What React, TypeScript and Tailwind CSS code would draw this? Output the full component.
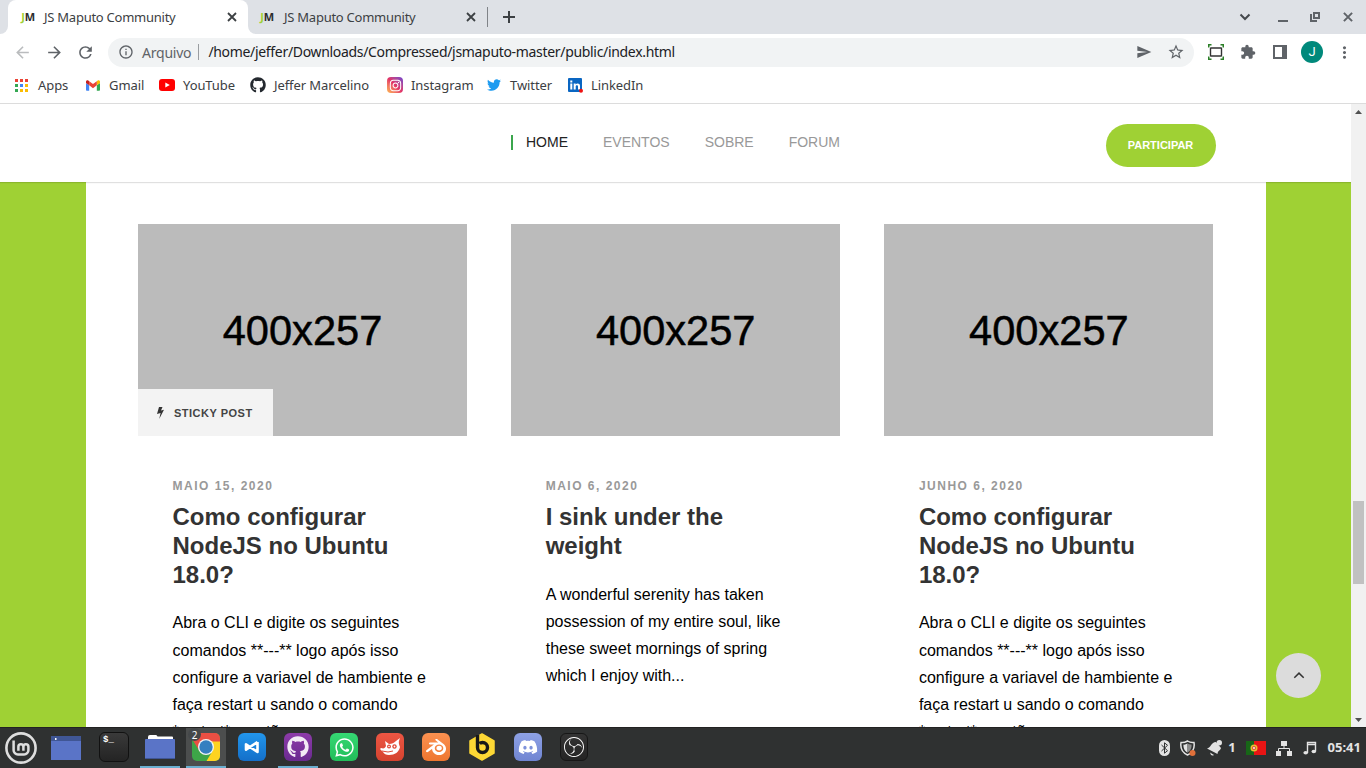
import React from "react";
import { MdArrowBack, MdArrowForward, MdRefresh, MdInfoOutline, MdSend, MdStarBorder, MdExtension, MdMoreVert } from "react-icons/md";
import { FaGithub, FaTwitter, FaWhatsapp, FaDiscord, FaInstagram } from "react-icons/fa";
import { SiBlender, SiObsstudio } from "react-icons/si";

function Favicon() {
  return (
    <span className="flex w-4 justify-center font-['Open_Sans',sans-serif] text-[11px] leading-4 font-bold tracking-[-0.3px]">
      <span className="text-[#9fd134]">J</span>
      <span className="text-[#2c2c2c]">M</span>
    </span>
  );
}

function TabClose() {
  return (
    <svg className="mr-[3px] size-[10px]" viewBox="0 0 10 10" fill="none" stroke="#3c4043" strokeWidth="1.800"><path d="m1 1 8 8m0-8-8 8" /></svg>
  );
}

function TabStrip() {
  return (
    <div className="flex h-[34px] shrink-0 bg-[#dee1e6] text-[#3c4043]">
      <div className="flex w-2 bg-white"><div className="h-full w-full rounded-br-lg bg-[#dee1e6]" /></div>
      <div className="flex w-[240px] items-center rounded-t-lg bg-white pr-2 pl-3">
        <Favicon />
        <span className="ml-2 flex-1 pt-px text-[13px] tracking-[-0.250px] whitespace-nowrap">JS Maputo Community</span>
        <TabClose />
      </div>
      <div className="flex w-[239px] items-center bg-white">
        <div className="flex h-full w-full items-center rounded-bl-lg bg-[#dee1e6] pr-2 pl-[11px]">
          <Favicon />
          <span className="ml-[9px] flex-1 pt-px text-[13px] tracking-[-0.250px] whitespace-nowrap">JS Maputo Community</span>
          <TabClose />
        </div>
      </div>
      <div className="mt-[7px] h-5 w-px bg-[#808388]" />
      <div className="flex items-center pl-[15px]"><svg className="size-3" viewBox="0 0 12 12" stroke="#3c4043" strokeWidth="2"><path d="M6 0v12M0 6h12" /></svg></div>
      <div className="ml-auto flex items-center pr-[13px]">
        <svg className="mr-[26px] size-3" viewBox="0 0 12 12" fill="none" stroke="#45494d" strokeWidth="2"><path d="M1.500 3.500 6 8l4.500-4.500" /></svg>
        <svg className="mr-[20px] size-3" viewBox="0 0 12 12" fill="#5f6368"><path d="M1 9h10v2H1z" /></svg>
        <svg className="mr-[22px] size-3" viewBox="0 0 12 12" fill="none" stroke="#5f6368" strokeWidth="2"><path d="M5 2h5v5H5zM2 3v7h6" /></svg>
        <svg className="size-[10px]" viewBox="0 0 11 11" fill="none" stroke="#5f6368" strokeWidth="2.200"><path d="m1 1 9 9m0-9-9 9" /></svg>
      </div>
    </div>
  );
}

function Toolbar() {
  return (
    <div className="flex h-9 shrink-0 items-center pl-[13px] text-[#5f6368]">
      <MdArrowBack className="size-[19px] text-[#babcbe]" />
      <MdArrowForward className="ml-[13px] size-[19px]" />
      <MdRefresh className="ml-[12px] size-[19px]" />
      <div className="ml-[13px] flex h-[29px] w-[1086px] items-center rounded-full bg-[#f1f3f4] pr-[9px] pl-[10px]">
        <MdInfoOutline className="size-4" />
        <span className="ml-2 text-[14px] tracking-[-0.220px]">Arquivo</span>
        <span className="ml-[7px] h-4 w-px bg-[#9a9da1]" />
        <span className="ml-[9px] pb-px text-[14px] tracking-[-0.320px] whitespace-nowrap text-[#202124]">/home/jeffer/Downloads/Compressed/jsmaputo-master/public/index.html</span>
        <MdSend className="ml-auto size-4" />
        <MdStarBorder className="ml-[15px] size-[18px]" />
      </div>
      <svg className="ml-[14px] size-4" viewBox="0 0 16 16" fill="none">
        <path d="M.75 3.500V.75H3.500M12.500.75h2.750V3.500M.75 12.500v2.750H3.500M12.500 15.250h2.750V12.500" stroke="#2b7f27" strokeWidth="1.500" />
        <rect x="2.500" y="4" width="11" height="8" rx=".5" stroke="#333" strokeWidth="1.400" />
      </svg>
      <MdExtension className="ml-4 size-4" />
      <svg className="ml-[17px] size-[14px]" viewBox="0 0 14 14"><path d="M1 1h12v12H1z" fill="none" stroke="#5f6368" strokeWidth="2" /><path d="M9 0h5v14H9z" fill="#5f6368" /></svg>
      <span className="ml-[14px] flex size-[22px] items-center justify-center rounded-full bg-[#00897b] font-['Roboto',sans-serif] text-[13px] text-white">J</span>
      <MdMoreVert className="ml-[12px] size-[19px]" />
    </div>
  );
}

function Bookmark({ label, icon, className }: { label: string; icon: React.ReactNode; className: string }) {
  return (
    <div className={`flex shrink-0 items-center ${className}`}>
      <span className="flex w-4 justify-center">{icon}</span>
      <span className="ml-2 pt-px text-[13px] tracking-[-0.080px] whitespace-nowrap">{label}</span>
    </div>
  );
}

const appColors = ["#ea4335", "#ea4335", "#ea4335", "#34a853", "#4285f4", "#fbbc04", "#34a853", "#fbbc04", "#fbbc04"];

function Bookmarks() {
  return (
    <div className="flex h-[34px] shrink-0 items-center border-b border-[#dcdcdc] pb-[3px] pl-[14px] text-[#3c4043]">
      <Bookmark className="w-[71px]" label="Apps" icon={
        <svg className="mr-px size-[13px]" viewBox="0 0 13 13">
          {appColors.map((c, i) => <rect key={i} x={(i % 3) * 5} y={Math.floor(i / 3) * 5} width="3" height="3" fill={c} />)}
        </svg>} />
      <Bookmark className="w-[74px]" label="Gmail" icon={
        <svg className="h-[11px] w-[14px]" viewBox="52 42 88 66">
          <path fill="#4285f4" d="M58 108h14V74L52 59v43c0 3.300 2.700 6 6 6" /><path fill="#34a853" d="M120 108h14c3.300 0 6-2.700 6-6V59l-20 15" />
          <path fill="#fbbc04" d="M120 48v26l20-15v-8c0-7.400-8.500-11.600-14.400-7.200" /><path fill="#ea4335" d="M72 74V48l24 18 24-18v26L96 92" />
          <path fill="#c5221f" d="M52 51v8l20 15V48l-5.600-4.200C60.500 39.400 52 43.600 52 51" />
        </svg>} />
      <Bookmark className="w-[91px]" label="YouTube" icon={
        <svg className="h-3 w-4" viewBox="0 0 16 12"><rect width="16" height="12" rx="3" fill="red" /><path d="m6.300 3.400 4.500 2.600-4.500 2.600z" fill="#fff" /></svg>} />
      <Bookmark className="w-[137px]" label="Jeffer Marcelino" icon={<FaGithub className="size-4 shrink-0 text-[#24292f]" />} />
      <Bookmark className="w-[99px]" label="Instagram" icon={
        <span className="flex size-4 items-center justify-center rounded-[4px] bg-linear-to-tr from-[#fdb84e] via-[#e23167] to-[#6f3dd0]"><FaInstagram className="size-[13px] text-white" /></span>} />
      <Bookmark className="w-[81px]" label="Twitter" icon={<FaTwitter className="size-[14px] text-[#1d9bf0]" />} />
      <Bookmark className="" label="LinkedIn" icon={
        <svg className="size-[15px]" viewBox="0 0 15 15">
          <rect width="14" height="14" rx="1" fill="#0a66c2" />
          <path d="M2.300 5.500h2v6h-2zM2.300 2.400h2v2h-2zM5.700 5.500h1.900v.9c1-1.500 4.400-1.500 4.400 1.400v3.700h-2V8.400c0-1.700-2.300-1.700-2.300 0v3.100h-2z" fill="#fff" />
          <circle cx="13" cy="12.700" r="2" fill="#e11" />
        </svg>} />
    </div>
  );
}

function SiteHeader() {
  return (
    <header className="relative z-10 flex h-[78px] shrink-0 bg-white shadow-[0_1px_1px_rgba(0,0,0,0.12)]">
      <nav className="mt-[29px] ml-[511px] flex h-[18px] gap-[35px] text-[14px] leading-[18px] text-[#999]">
        <span className="flex items-center text-[#222]"><span className="mr-[13px] h-[15px] w-0.5 bg-[#3ba64d]" />HOME</span>
        <span>EVENTOS</span>
        <span>SOBRE</span>
        <span>FORUM</span>
      </nav>
      <button className="mt-5 mr-[135px] ml-auto h-[43px] w-[110px] rounded-full bg-[#9fd134] pr-px text-[11px] font-bold text-white">PARTICIPAR</button>
    </header>
  );
}

function Card({ date, title, lines, sticky }: { date: string; title: string[]; lines: string[]; sticky?: boolean }) {
  return (
    <article className="w-[329px] shrink-0">
      <div className="relative flex h-[212px] items-center justify-center bg-[#bbb] text-[41.600px] text-black">
        <span className="pt-px leading-[48px] [-webkit-text-stroke:0.500px_black]">400x257</span>
        {sticky && (
          <div className="absolute bottom-0 left-0 flex h-[47px] w-[135px] items-center bg-[#f3f3f3] pt-px pl-[18px] text-[11px] font-bold tracking-[0.500px] text-[#444]">
            <svg className="mr-[9px] h-3 w-[9px] shrink-0" viewBox="0 0 9 12" fill="#333"><path d="M3 0h3.500L5 3.400 8 2.800 3.200 12 4.600 6 1 6.900z" /></svg>
            <span className="whitespace-nowrap">STICKY POST</span>
          </div>
        )}
      </div>
      <div className="pt-[42px] pl-[34.500px]">
        <p className="text-[12px] leading-4 font-bold tracking-[1.500px] text-[#999]">{date}</p>
        <h2 className="mt-[9px] text-[24px] leading-[28.800px] font-bold text-[#333]">
          {title.map((t) => <span key={t} className="block whitespace-nowrap">{t}</span>)}
        </h2>
        <p className="mt-5 text-[16px] leading-[27.200px] text-black">
          {lines.map((t) => <span key={t} className="block whitespace-nowrap">{t}</span>)}
        </p>
      </div>
    </article>
  );
}

const nodeTitle = ["Como configurar", "NodeJS no Ubuntu", "18.0?"];
const nodeLines = ["Abra o CLI e digite os seguintes", "comandos **---** logo após isso", "configure a variavel de hambiente e", "faça restart u sando o comando", "*restart* e então"];
const sinkLines = ["A wonderful serenity has taken", "possession of my entire soul, like", "these sweet mornings of spring", "which I enjoy with..."];

function Page() {
  return (
    <div className="flex h-[623px] shrink-0 overflow-hidden font-['Liberation_Sans',sans-serif]">
      <div className="relative flex w-[1351px] flex-col overflow-hidden bg-[#9fd134]">
        <SiteHeader />
        <div className="ml-[86px] flex min-h-0 w-[1180px] flex-1 gap-[44.200px] overflow-hidden bg-white pt-[42px] pl-[52px]">
          <Card sticky date="MAIO 15, 2020" title={nodeTitle} lines={nodeLines} />
          <Card date="MAIO 6, 2020" title={["I sink under the", "weight"]} lines={sinkLines} />
          <Card date="JUNHO 6, 2020" title={nodeTitle} lines={nodeLines} />
        </div>
        <div className="absolute right-[30px] bottom-[29px] flex size-[45px] items-center justify-center rounded-full bg-[#dcdcdc]">
          <svg className="size-3" viewBox="0 0 12 12" fill="none" stroke="#333" strokeWidth="1.500"><path d="M1.300 7.800 6 3.100l4.700 4.700" /></svg>
        </div>
      </div>
      <div className="flex w-[15px] flex-col items-center bg-[#f1f1f1]">
        <svg className="mt-[6px] h-1 w-[7px]" viewBox="0 0 7 4" fill="#505050"><path d="M0 4h7L3.500 0z" /></svg>
        <div className="mt-[387px] h-[83px] w-[11px] bg-[#c1c1c1]" />
        <svg className="mt-auto mb-[5px] h-1 w-[7px]" viewBox="0 0 7 4" fill="#505050"><path d="M0 0h7L3.500 4z" /></svg>
      </div>
    </div>
  );
}

function Task({ children, open, active }: { children: React.ReactNode; open?: boolean; active?: boolean }) {
  return (
    <div className={`flex h-full w-10 shrink-0 flex-col ${active ? "bg-[#4c4e4e]" : ""}`}>
      <div className="flex min-h-0 flex-1 items-center justify-center">{children}</div>
      <div className={`h-0.5 ${open ? "bg-[#6aaecf]" : ""}`} />
    </div>
  );
}

const tile = "flex size-7 items-center justify-center rounded-md text-white";

function Taskbar() {
  return (
    <div className="flex h-[41px] shrink-0 border-t border-[#222] bg-[#2f3131] pl-px font-['Noto_Sans',sans-serif]">
      <div className="mr-[5px] flex">
        <Task>
          <svg className="size-8 translate-y-px" viewBox="0 0 32 32" fill="none" stroke="#dedede">
            <circle cx="16" cy="16" r="14.600" strokeWidth="2.600" />
            <path d="M8.600 8.500v9.700a4.300 4.300 0 0 0 4.300 4.300h6.200a4.300 4.300 0 0 0 4.300-4.300v-3.400a2.500 2.500 0 0 0-5 0v4M18.400 14.800a2.500 2.500 0 0 0-5 0v4" strokeWidth="2.500" />
          </svg>
        </Task>
      </div>
      <div className="mr-2 flex">
        <Task>
          <svg className="h-6 w-[30px] translate-y-px" viewBox="0 0 30 24"><path d="M0 0h30v24H0z" fill="#5a74c7" /><path d="M0 0h30v5H0z" fill="#405695" /><path d="M4 2h1.500v2H4z" fill="#fff" /></svg>
        </Task>
      </div>
      <div className="flex gap-1.5">
        <Task><div className="flex size-[30px] rounded-md border border-[#111] bg-linear-to-b from-[#3a3a3a] to-[#242424] pt-px pl-[3px] font-['Liberation_Mono',monospace] text-[9px] leading-3 font-bold text-white">$_</div></Task>
        <Task open>
          <svg className="h-6 w-[30px]" viewBox="0 0 30 24"><path d="M3 2q0-2 2-2h6q1 0 1.500 1.500H27q1 0 1 1V8H3z" fill="#fff" /><rect y="4" width="30" height="20" rx="1" fill="#5a74c7" /><path d="M0 23h30v1H0z" fill="#405695" /></svg>
        </Task>
        <div className="relative">
          <Task open active>
            <svg className="size-7" viewBox="0 0 28 28">
              <defs><clipPath id="chrome"><rect width="28" height="28" rx="5" /></clipPath></defs>
              <g clipPath="url(#chrome)">
                <path d="M0 0h28v28H0z" fill="#3da548" /><path d="M14 8h14v20H14.500l6-10z" fill="#fed321" /><path d="M0 0h28v8.500H14L7.500 18 0 6z" fill="#ea4f43" />
              </g>
              <circle cx="14" cy="14" r="8" fill="#f5f5f5" /><circle cx="14" cy="14" r="6.700" fill="#347fc0" />
            </svg>
          </Task>
          <span className="absolute top-0 left-[2px] flex size-[13px] items-center justify-center rounded-full bg-[#45484a] text-[10px] leading-3 text-white">2</span>
        </div>
        <Task>
          <div className={`${tile} bg-linear-to-b from-[#2296ec] to-[#146fc9]`}>
            <svg className="h-[14px] w-4" viewBox="0 0 16 14" fill="none" stroke="#fff" strokeWidth="2.600" strokeLinejoin="round"><path d="M13.500 2v10L2 4.300v5.400L13.500 2" /></svg>
          </div>
        </Task>
        <Task open><div className={`${tile} bg-linear-to-b from-[#8d3ba9] to-[#6a2a90]`}><FaGithub className="size-[22px] text-[#f2eaf5]" /></div></Task>
        <Task><div className={`${tile} bg-linear-to-b from-[#35d873] to-[#21bd59]`}><FaWhatsapp className="size-[21px]" /></div></Task>
        <Task><div className={`${tile} bg-linear-to-b from-[#ed5643] to-[#d5432f]`}>
          <svg className="h-[18px] w-[21px]" viewBox="0 0 21 18"><path d="M20 0c-1 3-2 4 0 9-1 5-5 8-11 8-3 0-5-1-6-3L0 11l1-1c3 1 4 0 5-2L5 3l4 3c3 0 5-1 7-3z" fill="#fff" /><circle cx="9" cy="8.500" r="2" fill="#df4937" /><circle cx="14.500" cy="8.500" r="2.200" fill="#df4937" /><circle cx="9" cy="8.500" r=".8" fill="#fff" /><circle cx="14.500" cy="8.500" r=".9" fill="#fff" /><path d="m2 13 6 1 5-1" stroke="#df4937" fill="none" /></svg>
        </div></Task>
        <Task><div className={`${tile} bg-linear-to-b from-[#fb9150] to-[#ee762f]`}><SiBlender className="size-5" /></div></Task>
        <Task>
          <svg className="h-7 w-[26px]" viewBox="0 0 26 28"><path d="m13 1 12 7v12l-12 7-12-7V8z" fill="#fdd835" stroke="#fdd835" strokeWidth="1.500" strokeLinejoin="round" /><path d="M8.500 2v12.500a5 5 0 1 0 5-5q-2 0-3 1" fill="none" stroke="#191919" strokeWidth="3.400" /></svg>
        </Task>
        <Task><div className={`${tile} bg-linear-to-b from-[#8ea1e5] to-[#7085d2]`}><FaDiscord className="size-5" /></div></Task>
        <Task><div className={`${tile} border border-[#171717] bg-linear-to-b from-[#343434] to-[#242424]`}><SiObsstudio className="size-5 shrink-0" /></div></Task>
      </div>
      <div className="ml-auto flex items-center pr-[5px] text-[#e3e3e3]">
        <svg className="h-4 w-[11px]" viewBox="0 0 11 16"><rect width="11" height="16" rx="5.500" fill="#e3e3e3" /><path d="m2.500 5 6 5.700-3 2.500V2.800l3 2.500-6 5.700" stroke="#2f3131" fill="none" /></svg>
        <svg className="ml-[10px] size-4" viewBox="0 0 16 16"><path d="M7.500 1Q4 3 1 2.500C0 9 3 13 7.500 15 12 13 15 9 14 2.500 11 3 9 2 7.500 1Z" fill="none" stroke="#e3e3e3" strokeWidth="1.500" /><path d="M7.500 3.500Q5 5 3.500 4.500C3 8 5 11.500 7.500 12.500z" fill="#e3e3e3" /><path d="M7.500 3.500q2 1.300 4 1C12 8 10 11.500 7.500 12.500z" fill="#8d8d8d" /><circle cx="12.500" cy="13" r="3" fill="#e0703a" /></svg>
        <svg className="ml-[11px] size-4" viewBox="0 0 16 16" fill="#e3e3e3"><path d="M0 8.500C4 8 4 2 9 2l5 6c-1 3-3 2-3.500 6z" /><circle cx="12.300" cy="2.800" r="2.700" /><path d="M3 12.500 7 15q-3 2-4-2.500" /></svg>
        <span className="ml-[5px] text-[13px] font-bold">1</span>
        <svg className="ml-[10px] h-[14px] w-5" viewBox="0 0 20 14"><path d="M0 0h20v14H0z" fill="#e81414" /><path d="M0 0h8v14H0z" fill="#176617" /><circle cx="8" cy="7" r="3.500" fill="#e9bd32" /><circle cx="8" cy="7" r="2" fill="#df4937" /><circle cx="8" cy="7" r=".9" fill="#fff" /></svg>
        <svg className="ml-[10px] h-[15px] w-4" viewBox="0 0 16 15"><path d="M5 0h6v5H5zM0 10h5v5H0zM11 10h5v5h-5z" fill="#e3e3e3" /><path d="M8 5v3M2.500 10V7.500h11V10" stroke="#e3e3e3" fill="none" /></svg>
        <svg className="ml-[11px] h-[14px] w-[14px]" viewBox="0 0 14 14" fill="none" stroke="#e3e3e3"><path d="M4.500 12V1.500h8V10M4.500 3.500h8" strokeWidth="1.400" /><ellipse cx="2.700" cy="11.800" rx="2.300" ry="1.800" fill="#e3e3e3" stroke="none" /><ellipse cx="10.800" cy="10.500" rx="2.300" ry="1.800" fill="#e3e3e3" stroke="none" /></svg>
        <span className="ml-[11px] text-[13px] font-bold">05:41</span>
      </div>
    </div>
  );
}

export default function App() {
  return (
    <div className="flex h-[768px] w-[1366px] flex-col overflow-hidden bg-white font-['Noto_Sans',sans-serif]">
      <TabStrip />
      <Toolbar />
      <Bookmarks />
      <Page />
      <Taskbar />
    </div>
  );
}
